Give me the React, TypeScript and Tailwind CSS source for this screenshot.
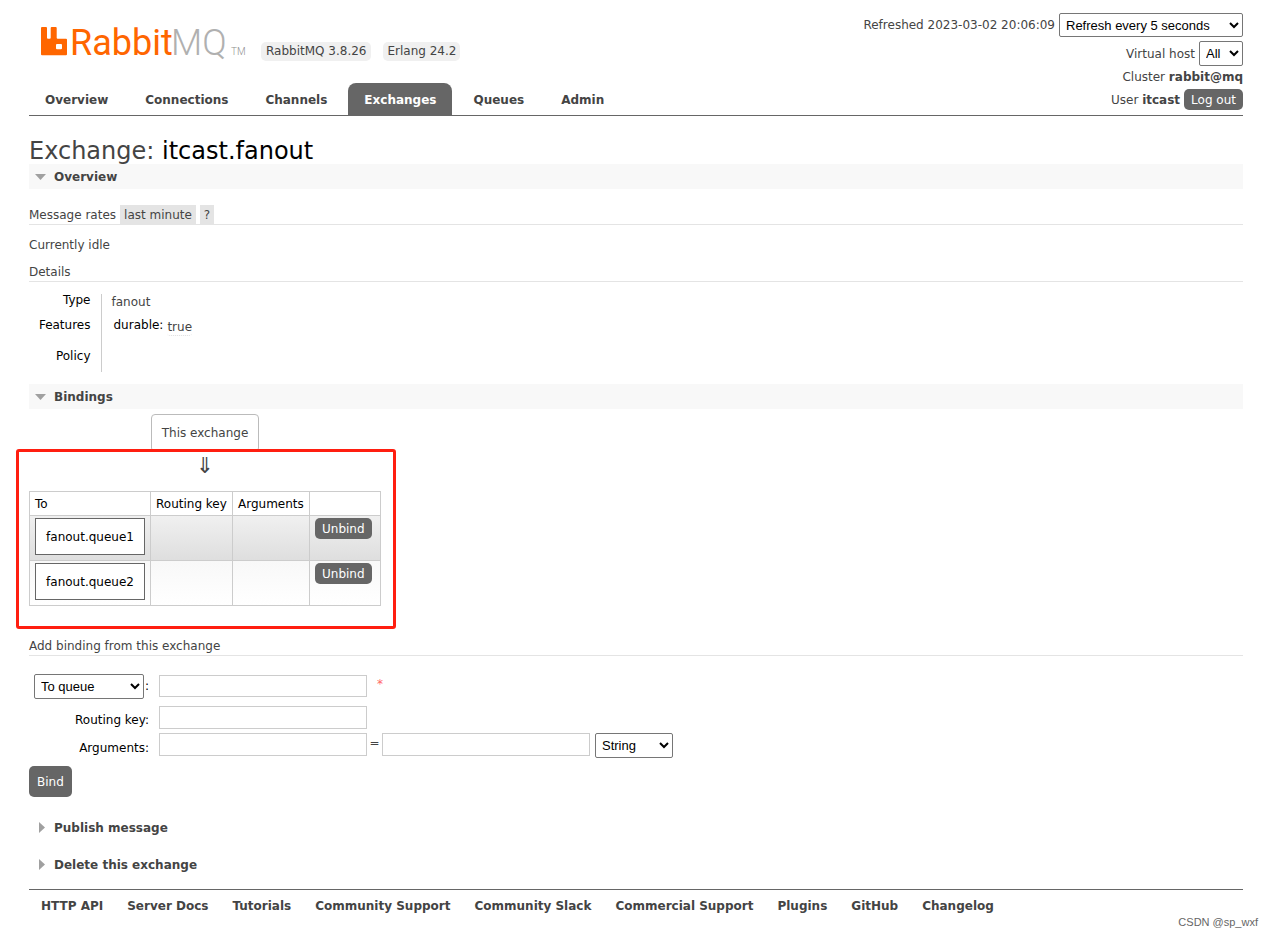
import React from "react";

const tabs = ["Overview", "Connections", "Channels", "Exchanges", "Queues", "Admin"];
const footerLinks = [
  "HTTP API",
  "Server Docs",
  "Tutorials",
  "Community Support",
  "Community Slack",
  "Commercial Support",
  "Plugins",
  "GitHub",
  "Changelog",
];
const bindings = ["fanout.queue1", "fanout.queue2"];

const selectClass =
  "rounded-[2px] border border-[#767676] bg-white px-[2px] font-['Liberation_Sans',Arial,sans-serif] text-[13px] text-black";
const inputClass = "w-[208px] border border-[#ccc] bg-white px-1";

function Logo() {
  return (
    <a href="#home" aria-label="RabbitMQ" className="block">
      <svg width="208" height="42" viewBox="0 0 208 42" role="img" aria-hidden="true" className="overflow-visible">
        <path
          fill="#ff6600"
          d="M1 6h4a1 1 0 0 1 1 1v9.700a1 1 0 0 0 1 1h1.700a1 1 0 0 0 1-1V7a1 1 0 0 1 1-1h4a1 1 0 0 1 1 1v9.700a1 1 0 0 0 1 1h8.300a1 1 0 0 1 1 1V33.300a1 1 0 0 1-1 1H1a1 1 0 0 1-1-1V7a1 1 0 0 1 1-1zM16 23a1 1 0 0 0-1 1v3.300a1 1 0 0 0 1 1h4a1 1 0 0 0 1-1V24a1 1 0 0 0-1-1z"
        />
        <text x="29" y="34" fontSize="36" className="font-[Roboto,sans-serif] font-normal" fill="#ff6600">
          Rabbit
        </text>
        <text x="130" y="34" fontSize="36" className="font-[Roboto,sans-serif] font-light" fill="#b0b0b0">
          MQ
        </text>
        <text x="190" y="34" fontSize="10" className="font-[Roboto,sans-serif] font-light" fill="#909090">
          TM
        </text>
      </svg>
    </a>
  );
}

function SectionHeading({ title, open }: { title: string; open?: boolean }) {
  return (
    <h2 className={open ? "bg-[#f8f8f8]" : ""}>
      <button type="button" className="flex h-[25px] w-full items-center gap-[7px] pl-[5px] text-left font-bold">
        <svg width="13" height="12" viewBox="0 0 13 12" aria-hidden="true">
          <path fill="#a0a0a0" d={open ? "M1 3h11L6.500 9z" : "M5 0v11l6-5.500z"} />
        </svg>
        {title}
      </button>
    </h2>
  );
}

function Header() {
  return (
    <header className="flex items-end justify-between border-b border-[#666]">
      <div>
        <div className="flex items-center gap-3 pb-5 pl-3">
          <Logo />
          <div className="flex gap-3 pt-[18px]">
            <span className="rounded-[5px] bg-[#f0f0f0] px-[5px] py-[2px] leading-[15px]">RabbitMQ 3.8.26</span>
            <span className="rounded-[5px] bg-[#f0f0f0] px-1 py-[2px] leading-[15px]">Erlang 24.2</span>
          </div>
        </div>
        <nav className="flex gap-[5px]">
          {tabs.map((tab) => (
            <a
              key={tab}
              href={"#" + tab.toLowerCase()}
              className={
                tab === "Exchanges"
                  ? "rounded-t-lg bg-[#666] px-4 pt-[9px] pb-[7px] font-bold text-white"
                  : "px-4 pt-[9px] pb-[7px] font-bold"
              }
            >
              {tab}
            </a>
          ))}
        </nav>
      </div>
      <div className="flex flex-col items-end gap-1 pb-[5px]">
        <div className="flex items-center gap-1">
          <label htmlFor="refresh">Refreshed 2023-03-02 20:06:09</label>
          <select id="refresh" className={selectClass + " h-6 w-[184px]"}>
            <option>Refresh every 5 seconds</option>
          </select>
        </div>
        <div className="flex items-center gap-1">
          <label htmlFor="vhost">Virtual host</label>
          <select id="vhost" className={selectClass + " h-[25px] w-11"}>
            <option>All</option>
          </select>
        </div>
        <div className="leading-[15px]">
          Cluster <b>rabbit@mq</b>
        </div>
        <div className="flex items-center gap-1">
          <span>
            User <b>itcast</b>
          </span>
          <button type="button" className="h-[21px] rounded-[5px] bg-[#666] px-[7px] text-white">
            Log out
          </button>
        </div>
      </div>
    </header>
  );
}

function Details() {
  return (
    <table className="mt-3 mb-3 border-collapse text-left">
      <tbody>
        <tr className="h-5 align-top">
          <th className="w-[72px] border-r border-[#ccc] pr-[10px] text-right font-normal text-black">
            <div className="-mt-[2px]">Type</div>
          </th>
          <td className="pl-[10px]">fanout</td>
        </tr>
        <tr className="h-7 align-top">
          <th className="border-r border-[#ccc] pt-[3px] pr-[10px] text-right font-normal text-black">Features</th>
          <td className="pt-[3px] pl-3">
            <span className="flex gap-1">
              <span className="text-black">durable:</span>
              <span className="mt-[2px] rounded-[3px] border-b border-dotted border-[#ddd] leading-4">true</span>
            </span>
          </td>
        </tr>
        <tr className="h-[30px] align-top">
          <th className="border-r border-[#ccc] pt-[6px] pr-[10px] text-right font-normal text-black">Policy</th>
          <td></td>
        </tr>
      </tbody>
    </table>
  );
}

function Bindings() {
  return (
    <div className="relative w-fit pt-[5px] pb-[23px]">
      <div className="flex flex-col items-center">
        <div className="rounded-[4px] border border-[#bbb] px-[10px] py-[10px]">This exchange</div>
        <div className="flex h-[39px] items-center pb-3 text-[22px] text-[#444]">⇓</div>
      </div>
      <table className="border-collapse text-left text-black">
        <thead>
          <tr className="h-6">
            <th className="w-[121px] border border-[#ccc] px-[5px] font-normal">To</th>
            <th className="w-[82px] border border-[#ccc] pl-[5px] font-normal whitespace-nowrap">Routing key</th>
            <th className="w-[77px] border border-[#ccc] pl-[5px] font-normal">Arguments</th>
            <th className="w-[71px] border border-[#ccc]"></th>
          </tr>
        </thead>
        <tbody>
          {bindings.map((queue, i) => (
            <tr
              key={queue}
              className={
                i === 0
                  ? "h-[45px] bg-linear-to-b from-[#f0f0f0] to-[#dedede] align-top"
                  : "h-[45px] bg-linear-to-b from-[#f8f8f8] to-white align-top"
              }
            >
              <td className="border border-[#ccc] px-[5px] pt-[2px]">
                <a
                  href={"#" + queue}
                  className="block border border-[#666] bg-white pt-[10px] pb-2 text-center leading-[17px]"
                >
                  {queue}
                </a>
              </td>
              <td className="border border-[#ccc]"></td>
              <td className="border border-[#ccc]"></td>
              <td className="border border-[#ccc] px-[5px] pt-[2px]">
                <button type="button" className="block h-[21px] rounded-[5px] bg-[#666] px-[7px] text-white">
                  Unbind
                </button>
              </td>
            </tr>
          ))}
        </tbody>
      </table>
      <div className="pointer-events-none absolute top-10 -right-[15px] bottom-0 -left-[13px] rounded-[3px] border-[3px] border-[#ff1e10]" />
    </div>
  );
}

function BindingForm() {
  return (
    <form className="mt-[18px]">
      <div className="grid grid-cols-[120px_1fr] gap-x-[10px] gap-y-1 text-black">
        <div className="flex h-7 items-start justify-end gap-[1px]">
          <select aria-label="Destination type" className={selectClass + " h-[25px] w-[110px]"}>
            <option>To queue</option>
            <option>To exchange</option>
          </select>
          <span className="pt-1">:</span>
        </div>
        <div className="flex items-start gap-[10px]">
          <input aria-label="Destination" className={inputClass + " mt-[1px] h-[22px]"} />
          <span className="pt-[2px] text-[#f66]">*</span>
        </div>
        <label htmlFor="routing-key" className="pt-[6px] text-right">
          Routing key:
        </label>
        <input id="routing-key" className={inputClass + " h-[23px]"} />
        <label htmlFor="argument-key" className="pt-[7px] text-right">
          Arguments:
        </label>
        <div className="flex items-start">
          <input id="argument-key" className={inputClass + " h-[23px]"} />
          <span className="w-[15px] pt-[2px] text-center text-[#444]">=</span>
          <input aria-label="Argument value" className={inputClass + " h-[23px]"} />
          <select aria-label="Argument type" className={selectClass + " ml-[5px] h-[25px] w-[78px]"}>
            <option>String</option>
          </select>
        </div>
      </div>
      <button type="button" className="mt-2 h-[31px] rounded-[5px] bg-[#666] px-2 text-white">
        Bind
      </button>
    </form>
  );
}

export default function App() {
  return (
    <div className="min-h-screen bg-white pt-[13px] font-['DejaVu_Sans',Verdana,sans-serif] text-[12px] leading-4 text-[#444]">
      <div className="pr-[30px] pl-[29px]">
        <Header />
        <main>
          <h1 className="mt-[22px] text-[24px] leading-[26px]">
            Exchange: <span className="text-black">itcast.fanout</span>
          </h1>
          <SectionHeading title="Overview" open />
          <div className="mt-4 flex items-center gap-1 border-b border-[#e4e4e4]">
            <h3>Message rates</h3>
            <button type="button" className="h-[19px] bg-[#e4e4e4] px-1">
              last minute
            </button>
            <button type="button" className="h-[19px] bg-[#e4e4e4] px-1">
              ?
            </button>
          </div>
          <p className="mt-3">Currently idle</p>
          <h3 className="mt-[11px] border-b border-[#e4e4e4] pb-[1px]">Details</h3>
          <Details />
          <SectionHeading title="Bindings" open />
          <Bindings />
          <h3 className="mt-[9px] border-b border-[#e4e4e4] pb-[1px]">Add binding from this exchange</h3>
          <BindingForm />
          <div className="mt-[18px] mb-3 flex flex-col gap-3">
            <SectionHeading title="Publish message" />
            <SectionHeading title="Delete this exchange" />
          </div>
        </main>
        <footer className="flex flex-wrap gap-6 border-t border-[#666] px-3 pt-2 font-bold">
          {footerLinks.map((link) => (
            <a key={link} href={"#" + link.toLowerCase().replace(" ", "-")}>
              {link}
            </a>
          ))}
        </footer>
      </div>
      <div className="pr-[15px] text-right font-['Liberation_Sans',Arial,sans-serif] text-[11px] text-[#666]">
        CSDN @sp_wxf
      </div>
    </div>
  );
}
